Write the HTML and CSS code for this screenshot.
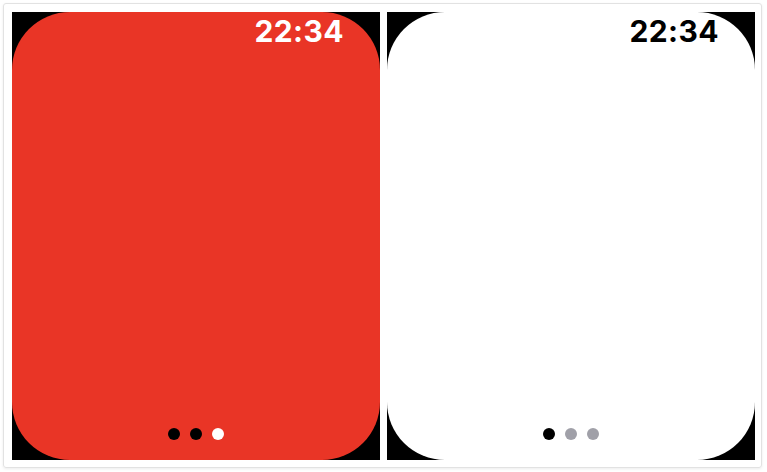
FILE: index.html
```html
<!DOCTYPE html>
<html>
<head>
<meta charset="utf-8">
<link rel="stylesheet" href="styles.css">
</head>
<body>
<div class="card">
  <div class="watch">
    <div class="screen screen-red">
      <div class="time time-light">22:34</div>
      <div class="dots">
        <span class="dot dot-black"></span>
        <span class="dot dot-black"></span>
        <span class="dot dot-white"></span>
      </div>
    </div>
  </div>
  <div class="watch">
    <div class="screen screen-white">
      <div class="time time-dark">22:34</div>
      <div class="dots">
        <span class="dot dot-black"></span>
        <span class="dot dot-gray"></span>
        <span class="dot dot-gray"></span>
      </div>
    </div>
  </div>
</div>
</body>
</html>
```

FILE: styles.css
```css
html, body {
  margin: 0;
  padding: 0;
  background: #ffffff;
}
body {
  width: 767px;
  height: 472px;
  overflow: hidden;
  font-family: Inter, "Noto Sans", sans-serif;
}
.card {
  margin: 3px 0 0 3px;
  width: 743px;
  height: 448px;
  padding: 8px 6px 7px 8px;
  border: 1px solid #e2e2e2;
  border-radius: 3px;
  box-shadow: 0 1px 3px rgba(0,0,0,0.08);
  display: flex;
  gap: 7px;
}
.watch {
  width: 368px;
  height: 448px;
  background: #000;
  display: flex;
}
.screen {
  flex: 1;
  border-radius: 58px;
  display: flex;
  flex-direction: column;
  justify-content: space-between;
  align-items: stretch;
}
.screen-red { background: #e93526; }
.screen-white { background: #ffffff; }
.time {
  text-align: right;
  font-size: 30px;
  font-weight: 700;
  line-height: 36px;
  padding: 1px 36px 0 0;
  letter-spacing: 0.4px;
}
.time-light { color: #ffffff; }
.time-dark { color: #000000; }
.dots {
  display: flex;
  justify-content: center;
  gap: 10px;
  padding-bottom: 20px;
  padding-right: 1px;
}
.dot {
  width: 12px;
  height: 12px;
  border-radius: 50%;
}
.dot-black { background: #000; }
.dot-white { background: #fff; }
.dot-gray { background: #a0a0a8; }
```
